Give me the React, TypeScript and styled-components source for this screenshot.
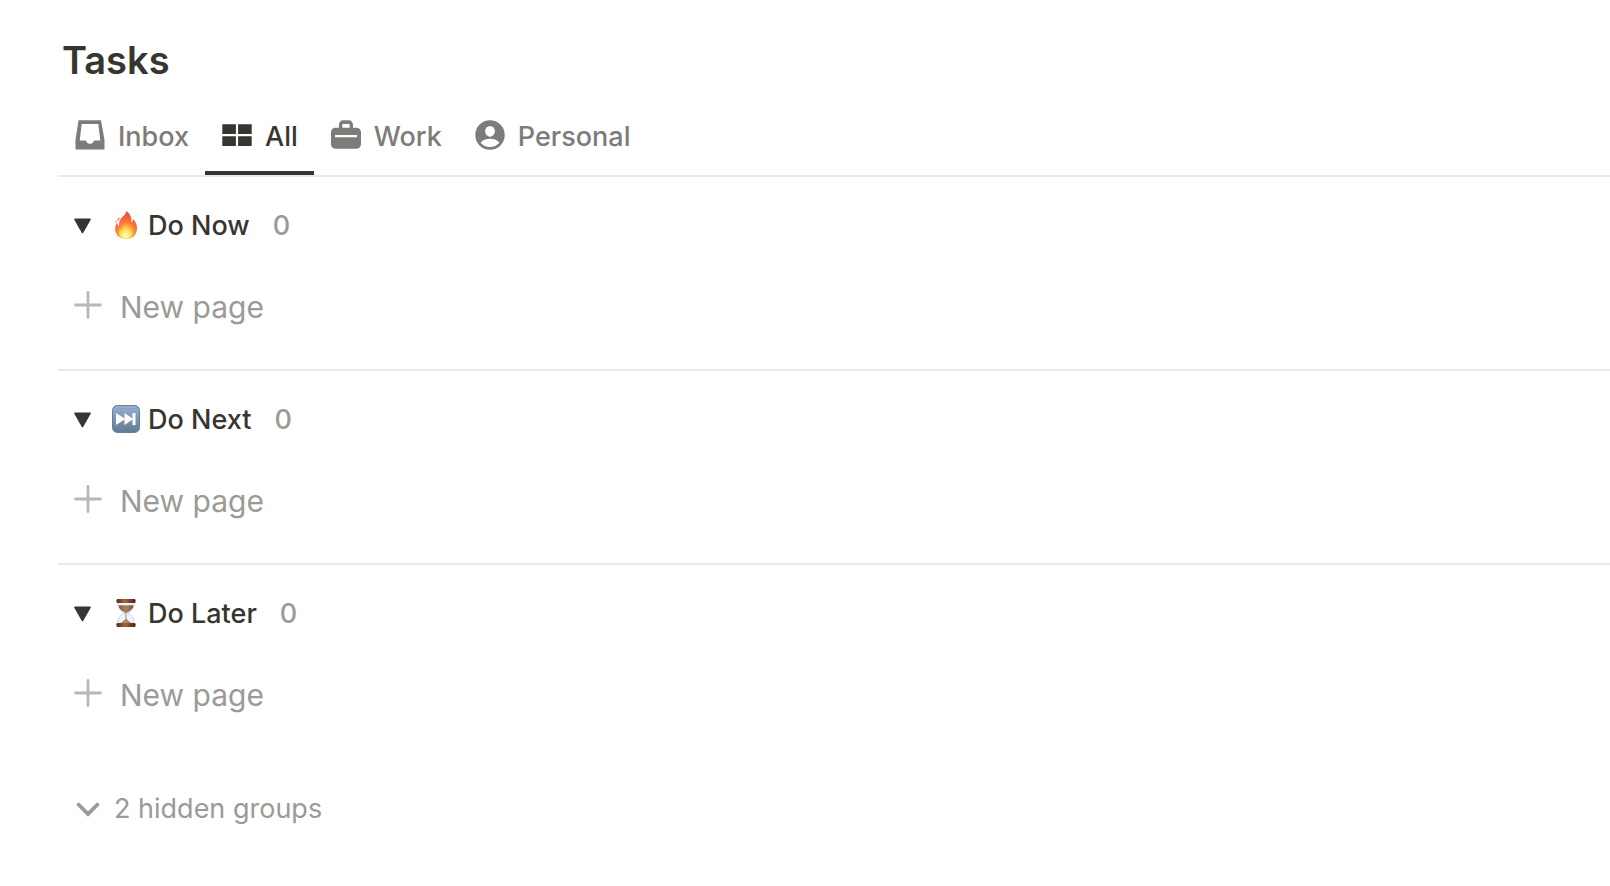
import React, { useState } from "react";
import styled, { createGlobalStyle } from "styled-components";

const GlobalStyle = createGlobalStyle`
  *, *::before, *::after { box-sizing: border-box; }
  body {
    margin: 0;
    background: #ffffff;
    color: #37352f;
    font-family: Inter, "Liberation Sans", sans-serif;
  }
  h1, h2 { margin: 0; }
  button { border: 0; padding: 0; background: none; font: inherit; cursor: pointer; }
  svg { display: block; flex: none; }
`;

const Page = styled.main`
  padding: 36px 0 32px 58px;
`;

const Title = styled.h1`
  padding-left: 4px;
  font-size: 38px;
  line-height: 48px;
  font-weight: 600;
`;

const TabBar = styled.nav`
  display: flex;
  height: 93px;
  padding-top: 15px;
  border-bottom: 2px solid #e9e9e8;
`;

const Tab = styled.button<{ $active: boolean }>`
  display: flex;
  align-items: center;
  gap: 12px;
  padding: 0 16px;
  border-bottom: 4px solid ${(p) => (p.$active ? "#37352f" : "transparent")};
  color: ${(p) => (p.$active ? "#37352f" : "#7d7c78")};
  font-size: 27px;
  line-height: 36px;
  font-weight: 500;
`;

const Label = styled.span`
  padding-top: 3px;
`;

const Group = styled.section`
  padding: 28px 0 40px;
  & + & { border-top: 2px solid #e9e9e8; }
`;

const GroupHeader = styled.header`
  display: flex;
  align-items: center;
  height: 40px;
  padding-left: 16px;
`;

const Toggle = styled.button`
  width: 38px;
  padding-top: 2px;
  color: #37352f;
`;

const GroupName = styled.h2`
  margin: 0 23px 0 8px;
  padding-top: 2px;
  font-size: 27px;
  line-height: 40px;
  font-weight: 500;
`;

const Count = styled.span`
  padding-top: 2px;
  color: #9b9a97;
  font-size: 27px;
  line-height: 40px;
  font-weight: 500;
`;

const NewPage = styled.button`
  display: flex;
  align-items: center;
  gap: 18px;
  height: 48px;
  margin-top: 36px;
  padding-left: 16px;
  color: #9b9a97;
  font-size: 30px;
  line-height: 44px;
`;

const HiddenGroups = styled.button`
  display: flex;
  align-items: center;
  gap: 13px;
  margin-top: 32px;
  padding-left: 17px;
  color: #9b9a97;
  font-size: 27px;
  line-height: 40px;
`;

const InboxIcon = () => (
  <svg width="32" height="32" viewBox="0 0 32 32" aria-hidden="true">
    <path fill="currentColor" fillRule="evenodd" d="M4.500 1.300h22.500L30.500 21v9.500h-29V21zM7.700 5L5.700 21.500h5.300c.9 0 1.300.6 1.700 1.400.5 1 1.700 1.900 3.300 1.900s2.800-.9 3.300-1.900c.4-.8.8-1.400 1.700-1.400h5.300L24.300 5z" />
  </svg>
);

const BoardIcon = () => (
  <svg width="32" height="32" viewBox="0 0 32 32" fill="currentColor" aria-hidden="true">
    <path d="M1.300 5.200H14.900v9.800H1.300zM17.100 5.200H30.700v9.800H17.100zM1.300 17.200H14.900V27H1.300zM17.100 17.200H30.700V27H17.100z" />
  </svg>
);

const WorkIcon = () => (
  <svg width="32" height="32" viewBox="0 0 32 32" aria-hidden="true">
    <path fill="currentColor" fillRule="evenodd" d="M9 8.800V6C9 3 10.700 1.300 13.200 1.300h5.600C21.300 1.300 23 3 23 6v2.800h3.500C29 8.800 31 10.800 31 13.300v12c0 2.500-2 4.500-4.500 4.500h-21C3 29.800 1 27.800 1 25.300V13.300c0-2.500 2-4.500 4.500-4.500zM12.400 8.800h7.200V5h-7.200zM5 16.100v2.200h22v-2.200z" />
  </svg>
);

const PersonIcon = () => (
  <svg width="32" height="32" viewBox="0 0 32 32" aria-hidden="true">
    <circle cx="16" cy="16" r="14.700" fill="currentColor" />
    <ellipse cx="16" cy="12.300" rx="4.900" ry="5.400" fill="#fff" />
    <path fill="#fff" d="M6.500 23.700C8.500 21 12 19.700 16 19.700s7.500 1.300 9.500 4c-2.500 2.800-5.900 4.300-9.500 4.300s-7-1.500-9.500-4.300z" />
  </svg>
);

const FireIcon = () => (
  <svg width="28" height="28" viewBox="0 0 28 28" role="img" aria-label="Fire">
    <defs>
      <radialGradient id="flame" cx=".5" cy=".86" r=".85">
        <stop offset="0" stopColor="#fff36a" />
        <stop offset=".3" stopColor="#ffb33f" />
        <stop offset=".6" stopColor="#fa6f3a" />
        <stop offset="1" stopColor="#e84a33" />
      </radialGradient>
      <radialGradient id="core" cx=".5" cy=".85" r=".8">
        <stop offset="0" stopColor="#fffccf" />
        <stop offset=".45" stopColor="#ffe35c" />
        <stop offset="1" stopColor="#ff9d3c" stopOpacity=".4" />
      </radialGradient>
    </defs>
    <path fill="url(#flame)" d="M14 .2c4 1.800 5.900 6.200 5.600 11.200 1-.8 1.500-2 1.600-3.500 3 3 4.300 7 3.700 11C24 24.700 20 28 14.200 28 8 28 3.300 24.400 3.200 18.300c0-2.800.7-4.900 1.900-6.600.3 1.500.9 2.600 1.900 3.200-.2-4.600 1.200-7.100 3.600-9.200C12.700 4 14 2.500 14 .2z" />
    <path fill="url(#core)" d="M13.800 11c.4 3 4.200 4 4.600 7.400.8-.5 1.200-1.100 1.400-2 2.400 5.800.3 10.800-5.500 11.100-6 .2-9-4.600-6.800-9.800.4 1 1 1.700 1.700 2-.4-4 3.800-5 4.600-8.700z" />
    <path fill="#fa7458" d="M7.300 6.500c.3 1.700-.5 2.900-1.800 3.500-.5-1.500.2-2.900 1.800-3.500zM4.300 9.400c.6 1.200.2 2-.6 2.500-.7-1-.4-1.900.6-2.500z" />
  </svg>
);

const NextIcon = () => (
  <svg width="28" height="28" viewBox="0 0 28 28" role="img" aria-label="Next track">
    <defs>
      <linearGradient id="key" x1="0" y1="0" x2="0" y2="1">
        <stop offset="0" stopColor="#7894b8" />
        <stop offset=".15" stopColor="#8ea9c9" />
        <stop offset="1" stopColor="#627993" />
      </linearGradient>
    </defs>
    <rect x=".5" y=".5" width="27" height="27" rx="5" fill="url(#key)" stroke="#637f9f" />
    <path d="M3 3.500Q3.500 2 6 2h16q2.500 0 3 1.500" fill="none" stroke="#a9c0da" strokeWidth="1" />
    <path fill="#fff" d="M4 8l8.500 5.500V8l8 5.500V8H23.500v12h-3v-5.500l-8 5.500v-5.500L4 20z" />
  </svg>
);

const HourglassIcon = () => (
  <svg width="28" height="28" viewBox="0 0 28 28" role="img" aria-label="Hourglass">
    <defs>
      <linearGradient id="wood" x1="0" x2="1">
        <stop offset="0" stopColor="#5b2b16" />
        <stop offset=".45" stopColor="#a5623d" />
        <stop offset="1" stopColor="#4b2010" />
      </linearGradient>
      <linearGradient id="sand" x1="0" x2="1">
        <stop offset="0" stopColor="#7d5c43" />
        <stop offset=".5" stopColor="#a98460" />
        <stop offset="1" stopColor="#725039" />
      </linearGradient>
    </defs>
    <path d="M6 3.500h16c.5 5-1.200 8-6.500 10.500C20.800 16.500 22.500 20 22 25H6c-.5-5 1.200-8.500 6.500-11C7.200 11.500 5.500 8.500 6 3.500z" fill="#eef2fb" stroke="#c3cce0" strokeWidth=".8" />
    <path d="M6.500 6.300h15c-.3 3.300-2.500 5-5.500 6.700-1.200.6-1.300 1-2 1s-.8-.4-2-1c-3-1.700-5.200-3.400-5.500-6.700z" fill="url(#sand)" />
    <path d="M13.500 13h1v6.500c1 2 3 3.200 5 4.500h-11c2-1.300 4-2.500 5-4.500z" fill="#b38b62" />
    <rect x="4.500" y="0" width="19" height="4" rx="1.300" fill="url(#wood)" />
    <rect x="4.500" y="24" width="19" height="4" rx="1.300" fill="url(#wood)" />
  </svg>
);

const TriangleIcon = () => (
  <svg width="17" height="16" viewBox="0 0 17 16" aria-hidden="true">
    <path fill="currentColor" d="M1 .5h15c.8 0 1.100.7.700 1.300L9.300 14.700c-.4.700-1.200.7-1.600 0L.3 1.800C-.1 1.200.2.500 1 .5z" />
  </svg>
);

const PlusIcon = () => (
  <svg width="28" height="28" viewBox="0 0 28 28" aria-hidden="true">
    <path d="M14 1.500v25M1.500 14h25" stroke="#b9b8b6" strokeWidth="2.800" strokeLinecap="round" />
  </svg>
);

const ChevronIcon = () => (
  <svg width="26" height="26" viewBox="0 0 26 26" aria-hidden="true">
    <path d="M2.500 7.500L13 18 23.500 7.500" fill="none" stroke="currentColor" strokeWidth="3.800" />
  </svg>
);

const tabs = [
  { name: "Inbox", Icon: InboxIcon },
  { name: "All", Icon: BoardIcon },
  { name: "Work", Icon: WorkIcon },
  { name: "Personal", Icon: PersonIcon },
];

const groups = [
  { name: "Do Now", count: 0, Icon: FireIcon },
  { name: "Do Next", count: 0, Icon: NextIcon },
  { name: "Do Later", count: 0, Icon: HourglassIcon },
];

export default function App() {
  const [active, setActive] = useState("All");
  return (
    <>
      <GlobalStyle />
      <Page>
        <Title>Tasks</Title>
        <TabBar aria-label="Task views">
          {tabs.map(({ name, Icon }) => (
            <Tab key={name} type="button" $active={name === active} aria-pressed={name === active} onClick={() => setActive(name)}>
              <Icon />
              <Label>{name}</Label>
            </Tab>
          ))}
        </TabBar>
        {groups.map(({ name, count, Icon }) => (
          <Group key={name}>
            <GroupHeader>
              <Toggle type="button" aria-label={`Toggle ${name}`}>
                <TriangleIcon />
              </Toggle>
              <Icon />
              <GroupName>{name}</GroupName>
              <Count>{count}</Count>
            </GroupHeader>
            <NewPage type="button">
              <PlusIcon />
              <Label>New page</Label>
            </NewPage>
          </Group>
        ))}
        <HiddenGroups type="button">
          <ChevronIcon />
          <span>2 hidden groups</span>
        </HiddenGroups>
      </Page>
    </>
  );
}
